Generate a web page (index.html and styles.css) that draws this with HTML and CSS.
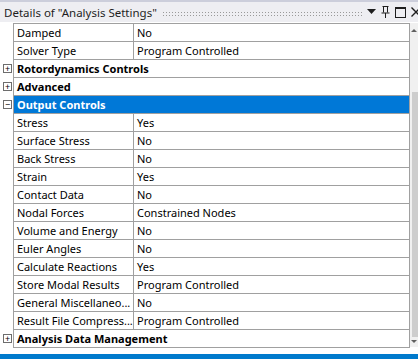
FILE: index.html
```
<!DOCTYPE html>
<html lang="en">
<head>
  <meta charset="UTF-8">
  <title>Details of "Analysis Settings"</title>
  <link rel="stylesheet" href="styles.css">
</head>
<body>
  <div class="panel">
    <div class="titlebar">
      <span class="title">Details of "Analysis Settings"</span>
      <span class="grip"></span>
      <span class="tb-icons">
        <svg width="9" height="6" viewBox="0 0 9 6"><path d="M0 0h9L4.5 5z" fill="#1e1e1e"/></svg>
        <svg width="9" height="12" viewBox="0 0 9 12"><path d="M1.5 0.5h6M2.5 0.5v6M6.5 0.5v6M0.5 7h8M4.5 7v5" stroke="#1e1e1e" fill="none"/></svg>
        <svg width="11" height="11" viewBox="0 0 11 11"><rect x="0.5" y="0.5" width="10" height="10" fill="none" stroke="#1e1e1e"/><path d="M0 1.5h11" stroke="#1e1e1e"/></svg>
        <svg width="10" height="10" viewBox="0 0 10 10"><path d="M0.5 0.5l9 9M9.5 0.5l-9 9" stroke="#1e1e1e" stroke-width="1.4"/></svg>
      </span>
    </div>

    <div class="body">
      <div class="tree">
        <table class="props">
          <tr><td class="tog"></td><td class="name">Damped</td><td class="val">No</td></tr>
          <tr><td class="tog"></td><td class="name">Solver Type</td><td class="val">Program Controlled</td></tr>
          <tr class="group"><td class="tog"><span class="box">+</span></td><td colspan="2">Rotordynamics Controls</td></tr>
          <tr class="group"><td class="tog"><span class="box">+</span></td><td colspan="2">Advanced</td></tr>
          <tr class="group selected"><td class="tog"><span class="box">&minus;</span></td><td colspan="2">Output Controls</td></tr>
          <tr><td class="tog"></td><td class="name">Stress</td><td class="val">Yes</td></tr>
          <tr><td class="tog"></td><td class="name">Surface Stress</td><td class="val">No</td></tr>
          <tr><td class="tog"></td><td class="name">Back Stress</td><td class="val">No</td></tr>
          <tr><td class="tog"></td><td class="name">Strain</td><td class="val">Yes</td></tr>
          <tr><td class="tog"></td><td class="name">Contact Data</td><td class="val">No</td></tr>
          <tr><td class="tog"></td><td class="name">Nodal Forces</td><td class="val">Constrained Nodes</td></tr>
          <tr><td class="tog"></td><td class="name">Volume and Energy</td><td class="val">No</td></tr>
          <tr><td class="tog"></td><td class="name">Euler Angles</td><td class="val">No</td></tr>
          <tr><td class="tog"></td><td class="name">Calculate Reactions</td><td class="val">Yes</td></tr>
          <tr><td class="tog"></td><td class="name">Store Modal Results</td><td class="val">Program Controlled</td></tr>
          <tr><td class="tog"></td><td class="name">General Miscellaneo...</td><td class="val">No</td></tr>
          <tr><td class="tog"></td><td class="name">Result File Compress...</td><td class="val">Program Controlled</td></tr>
          <tr class="group"><td class="tog"><span class="box">+</span></td><td colspan="2">Analysis Data Management</td></tr>
        </table>
      </div>
      <div class="scrollbar">
        <span class="arrow up"></span>
        <span class="thumb"></span>
        <span class="arrow down"></span>
      </div>
    </div>

    <div class="statusbar"></div>
  </div>
</body>
</html>
```
FILE: styles.css
```
body {
  margin: 0;
  font-family: 'Noto Sans', sans-serif;
  font-size: 11px;
  color: #000;
  background-color: #fff;
}

.panel {
  width: 418px;
  height: 359px;
  display: flex;
  flex-direction: column;
  overflow: hidden;
}

.titlebar {
  height: 20px;
  border-top: 2px solid #cccedb;
  background-color: #eeeef2;
  display: flex;
  align-items: center;
  padding-left: 4px;
  color: #1e1e1e;
}

.title {
  white-space: nowrap;
  font-size: 11.5px;
}

.grip {
  flex: 1;
  height: 5px;
  margin: 2px 5px 0 5px;
  background-image: radial-gradient(circle, #9a9a9a 0.6px, transparent 0.8px);
  background-size: 3px 3px;
}

.tb-icons {
  display: flex;
  align-items: center;
  gap: 5px;
  margin-right: -3px;
}

.tb-icons svg {
  display: block;
}

.body {
  flex: 1;
  display: flex;
  padding-top: 1px;
}

.tree {
  width: 410px;
}

.props {
  border-collapse: collapse;
  table-layout: fixed;
  width: 410px;
}

.props td {
  height: 17px;
  padding: 0 0 0 3px;
  border: 1px solid #a0a0a0;
  white-space: nowrap;
  overflow: hidden;
  line-height: 17px;
}

.props td.tog {
  width: 13px;
  padding: 0;
  border: none;
  background-color: #fff;
}

.props td.name {
  width: 116px;
}

.group td {
  font-weight: bold;
}

.selected td {
  background-color: #0078d7;
  color: #fff;
}

.box {
  display: block;
  width: 7px;
  height: 7px;
  margin: 0 0 0 3px;
  border: 1px solid #6d6d6d;
  font-size: 9px;
  line-height: 7px;
  text-align: center;
  font-weight: normal;
  color: #000;
  background-color: #fff;
}

.scrollbar {
  width: 8px;
  background-color: #f0f0f0;
  display: flex;
  flex-direction: column;
  align-items: flex-end;
  margin-bottom: 7px;
}

.thumb {
  width: 6px;
  margin-top: 60px;
  flex: 1;
  background-color: #cdcdcd;
}

.arrow {
  width: 0;
  height: 0;
  margin: 6px 1px 0 0;
  border-left: 3px solid transparent;
  border-right: 3px solid transparent;
}

.arrow.up {
  border-bottom: 3px solid #606060;
}

.arrow.down {
  margin: 3px 1px 4px 0;
  border-top: 3px solid #606060;
}

.statusbar {
  height: 5px;
  background-color: #007acc;
}
```
